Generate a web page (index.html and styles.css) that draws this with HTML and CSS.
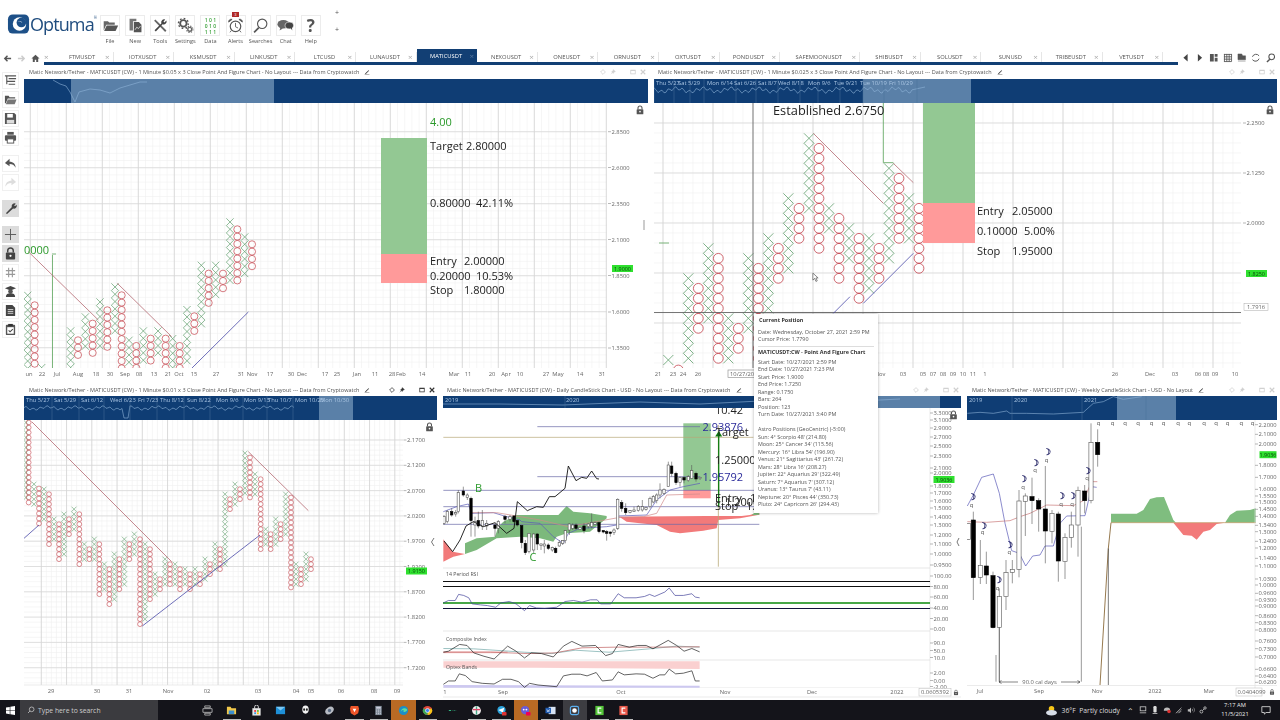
FILE: index.html
```html
<!DOCTYPE html>
<html lang="en">
<head>
<meta charset="utf-8">
<title>Optuma</title>
<link rel="stylesheet" href="styles.css">
</head>
<body>
<svg class="defs" width="0" height="0" aria-hidden="true">
  <symbol id="i-lock" viewBox="0 0 12 14"><path d="M3 6V4a3 3 0 0 1 6 0v2" fill="none" stroke="currentColor" stroke-width="1.6"/><rect x="1" y="6" width="10" height="7.5" rx="1" fill="currentColor"/><circle cx="6" cy="9.5" r="1.2" fill="#fff"/></symbol>
  <symbol id="i-pencil" viewBox="0 0 10 10"><path d="M2 7.5 7.5 2l1 1L3 8.5H2z" fill="currentColor"/><path d="M1 9.6h8" stroke="currentColor" stroke-width=".8"/></symbol>
  <symbol id="i-diamond" viewBox="0 0 8 8"><path d="M4 .8 7.2 4 4 7.2.8 4z" fill="none" stroke="currentColor"/></symbol>
  <symbol id="i-pin" viewBox="0 0 8 8"><path d="M4.5.8 7.2 3.5 5.6 4 4.2 6 2 3.8 4 2.4zM3 5 1 7" fill="currentColor" stroke="currentColor" stroke-width=".6"/></symbol>
  <symbol id="i-max" viewBox="0 0 8 8"><rect x="1" y="1.5" width="6" height="5" fill="none" stroke="currentColor" stroke-width="1"/><path d="M1 2h6" stroke="currentColor" stroke-width="1.2"/></symbol>
  <symbol id="i-x" viewBox="0 0 8 8"><path d="M1 1l6 6M7 1 1 7" stroke="currentColor" stroke-width="1.5"/></symbol>
</svg>

<header class="topbar">
  <div class="logo">
    <svg class="logo-mark" viewBox="0 0 24 22"><rect x="1" y="1" width="22" height="20" rx="5" fill="#1d5088"/><circle cx="13" cy="11" r="7" fill="#fff"/><circle cx="15" cy="9.5" r="5" fill="#1d5088"/><path d="M11 9a4 4 0 0 1 5 1 3 3 0 0 0-5-1z" fill="#fff"/></svg>
    <span class="logo-word">Optuma</span><span class="logo-reg">®</span>
  </div>
  <nav class="tools">
    <div class="tool"><span class="tool-box"><svg viewBox="0 0 20 20"><path d="M2 5h5l1.500 1.500H15V9H5l-3 7z" fill="#666"/><path d="M5.500 10H19l-3 6.500H2.500z" fill="#555"/></svg></span><span class="tool-name">File</span></div>
    <div class="tool"><span class="tool-box"><svg viewBox="0 0 20 20"><path d="M3 2h8v3H7v11H3z" fill="#777"/><path d="M8 6h6l3 3v9H8z" fill="#555"/><path d="M9.500 15l2-3 2 1.500 2.500-3" fill="none" stroke="#fff" stroke-width=".8"/></svg></span><span class="tool-name">New</span></div>
    <div class="tool"><span class="tool-box"><svg viewBox="0 0 20 20"><path d="M4 3l13 13-1.500 1.500L2.500 4.500z" fill="#666"/><path d="M17 4a3.500 3.500 0 0 1-4.500 4.500L4.500 17 3 15.500l8-8A3.500 3.500 0 0 1 15.500 3L13.500 5.500l1 1z" fill="#444"/></svg></span><span class="tool-name">Tools</span></div>
    <div class="tool"><span class="tool-box"><svg viewBox="0 0 20 20"><circle cx="7.500" cy="7.500" r="3.800" fill="none" stroke="#555" stroke-width="2.200"/><circle cx="7.500" cy="7.500" r="5.800" fill="none" stroke="#555" stroke-width="1.600" stroke-dasharray="2 2.500"/><circle cx="15" cy="14.500" r="2.300" fill="none" stroke="#666" stroke-width="1.600"/><circle cx="15" cy="14.500" r="3.800" fill="none" stroke="#666" stroke-width="1.200" stroke-dasharray="1.500 1.500"/></svg></span><span class="tool-name">Settings</span></div>
    <div class="tool"><span class="tool-box binary">1 0 1<br>0 1 0<br>1 1 1</span><span class="tool-name">Data</span></div>
    <div class="tool"><span class="badge">3</span><span class="tool-box"><svg viewBox="0 0 20 20"><circle cx="10" cy="11" r="6.200" fill="none" stroke="#555" stroke-width="1.400"/><path d="M10 7v4.500l3 1.500" fill="none" stroke="#555"/><path d="M2 6a3 3 0 0 1 4-3.200zM18 6a3 3 0 0 0-4-3.200zM5 16l-1.500 2M15 16l1.500 2" fill="#555" stroke="#555"/></svg></span><span class="tool-name">Alerts</span></div>
    <div class="tool"><span class="tool-box"><svg viewBox="0 0 20 20"><circle cx="12" cy="8" r="5.500" fill="none" stroke="#555" stroke-width="1.300"/><path d="M8 12.500 2.500 18" stroke="#555" stroke-width="2"/></svg></span><span class="tool-name">Searches</span></div>
    <div class="tool"><span class="tool-box"><svg viewBox="0 0 20 20"><ellipse cx="7.500" cy="8.500" rx="7" ry="5" fill="#666"/><path d="M4 12l-1 4 4-2.500z" fill="#666"/><ellipse cx="14.500" cy="10" rx="5" ry="4" fill="#444" stroke="#fff" stroke-width=".7"/><path d="M16 13l2 3-.5-3.500z" fill="#444"/></svg></span><span class="tool-name">Chat</span></div>
    <div class="tool"><span class="tool-box qmark">?</span><span class="tool-name">Help</span></div>
  </nav>
  <div class="plus-stack"><span>+</span><span>+</span></div>
</header>

<div class="tabstrip">
  <div class="tab-nav">
    <svg viewBox="0 0 10 10"><path d="M9 5H2M5 2 2 5l3 3" fill="none" stroke="#555" stroke-width="1.600"/></svg>
    <svg viewBox="0 0 10 10"><path d="M1 5h7M5 2l3 3-3 3" fill="none" stroke="#ccc" stroke-width="1.600"/></svg>
    <svg viewBox="0 0 10 10"><path d="M5 .8.500 5H2v4h2.200V6.500h1.600V9H8V5h1.500z" fill="#555"/></svg>
  </div>
  <div class="tabs">
    <div class="tab stub"><i>×</i></div>
    <div class="tab"><b>FTMUSDT</b><i>×</i></div>
    <div class="tab"><b>IOTXUSDT</b><i>×</i></div>
    <div class="tab"><b>KSMUSDT</b><i>×</i></div>
    <div class="tab"><b>LINKUSDT</b><i>×</i></div>
    <div class="tab"><b>LTCUSD</b><i>×</i></div>
    <div class="tab"><b>LUNAUSDT</b><i>×</i></div>
    <div class="tab active"><b>MATICUSDT</b><i>×</i></div>
    <div class="tab"><b>NEXOUSDT</b><i>×</i></div>
    <div class="tab"><b>ONEUSDT</b><i>×</i></div>
    <div class="tab"><b>ORNUSDT</b><i>×</i></div>
    <div class="tab"><b>OXTUSDT</b><i>×</i></div>
    <div class="tab"><b>PONDUSDT</b><i>×</i></div>
    <div class="tab wide"><b>SAFEMOONUSDT</b><i>×</i></div>
    <div class="tab"><b>SHIBUSDT</b><i>×</i></div>
    <div class="tab"><b>SOLUSDT</b><i>×</i></div>
    <div class="tab"><b>SUNUSD</b><i>×</i></div>
    <div class="tab"><b>TRIBEUSDT</b><i>×</i></div>
    <div class="tab"><b>VETUSDT</b><i>×</i></div>
  </div>
  <div class="tab-tools">
    <svg viewBox="0 0 10 10"><path d="M7 1 2.500 5 7 9z" fill="#444"/></svg>
    <svg viewBox="0 0 10 10"><path d="M3 1l4.500 4L3 9z" fill="#444"/></svg>
    <svg viewBox="0 0 10 10"><path d="M1 1h4v8H1zM6 1h3v3H6zM6 5h3v4H6z" fill="#555"/></svg>
    <svg viewBox="0 0 10 10"><path d="M1 1.500h8M1 4h8M1 6.500h8M1 9h8M1.500 1v8M4 1v8M6.500 1v8M9 1v8" stroke="#555" stroke-width=".9"/></svg>
    <svg viewBox="0 0 10 10"><path d="M1 1h4l1 2h3v4H1zM1 8.500h8" fill="#555" stroke="#555" stroke-width=".5"/></svg>
    <svg viewBox="0 0 10 10"><path d="M8.500 3A4 4 0 0 0 1.500 4M1.500 7a4 4 0 0 0 7-1" fill="none" stroke="#555"/></svg>
    <svg viewBox="0 0 10 10"><circle cx="6" cy="4" r="3" fill="none" stroke="#555" stroke-width="1.100"/><path d="M4 6.500 1 9.500" stroke="#555" stroke-width="1.500"/></svg>
  </div>
</div>

<div class="desk">
  <aside class="side">
    <span class="sbtn"><svg viewBox="0 0 14 14"><path d="M1 2h12M5 5h8M3 8h9M5 11h7M3 2v9" stroke="#555" stroke-width="1.200" fill="none"/></svg></span>
    <span class="sbtn"><svg viewBox="0 0 14 14"><path d="M1 3h4l1 1.500h6V6H4l-2 5H1z" fill="#555"/><path d="M4 7h9.500l-2 5H2z" fill="#777"/></svg></span>
    <span class="sbtn"><svg viewBox="0 0 14 14"><path d="M1 1h10l2 2v10H1z" fill="#555"/><rect x="3.500" y="2" width="6" height="4" fill="#fff"/><rect x="3" y="8.500" width="8" height="4" fill="#ddd"/></svg></span>
    <span class="sbtn gap"><svg viewBox="0 0 14 14"><rect x="3.500" y="1" width="7" height="3" fill="#555"/><rect x="1" y="4.500" width="12" height="6" rx="1" fill="#555"/><rect x="3.500" y="8.500" width="7" height="4.500" fill="#fff" stroke="#555"/></svg></span>
    <span class="sbtn"><svg viewBox="0 0 14 14"><path d="M6 2 1 6.500 6 10V7.500c3 0 5 1 6.500 4C12.500 7.500 10 5 6 5z" fill="#555"/></svg></span>
    <span class="sbtn gap"><svg viewBox="0 0 14 14"><path d="M8 2l5 4.500L8 10V7.500c-3 0-5 1-6.500 4C1.500 7.500 4 5 8 5z" fill="#ddd"/></svg></span>
    <span class="sbtn on gap"><svg viewBox="0 0 14 14"><path d="M2 12 8.500 5.500A3 3 0 0 1 12.800 1.800L11 3.500l.8 1 1.700-1.500A3 3 0 0 1 9.800 7L3.300 13z" fill="#444"/></svg></span>
    <span class="sbtn on"><svg viewBox="0 0 14 14"><path d="M7 1v12M1 7h12" stroke="#555" stroke-width="1"/></svg></span>
    <span class="sbtn on lockbtn"><svg viewBox="0 0 12 14"><use href="#i-lock"/></svg></span>
    <span class="sbtn"><svg viewBox="0 0 14 14"><path d="M2 5h10M2 9h10M5 2v10M9 2v10" stroke="#999" stroke-width="1.200"/></svg></span>
    <span class="sbtn"><svg viewBox="0 0 14 14"><path d="M1 3.500 7 1l6 2.500L7 6z" fill="#444"/><circle cx="7" cy="7" r="2.500" fill="#555"/><path d="M2 13c0-3 2-4 5-4s5 1 5 4z" fill="#444"/></svg></span>
    <span class="sbtn"><svg viewBox="0 0 14 14"><path d="M2 1h7l3 3v9H2z" fill="#444"/><path d="M4 6h6M4 8h6M4 10h6" stroke="#fff" stroke-width=".8"/></svg></span>
    <span class="sbtn"><svg viewBox="0 0 14 14"><rect x="2" y="2" width="10" height="11" rx="1" fill="#555"/><rect x="4.500" y="1" width="5" height="2.500" fill="#333"/><rect x="3.500" y="4.500" width="7" height="7" fill="#fff"/><path d="M5 8l1.500 1.500 3-3" fill="none" stroke="#444" stroke-width="1.100"/></svg></span>
  </aside>

  <main class="panes">
    <section class="row row-top">
      <article class="pane w-a">
        <div class="title"><span>Matic Network/Tether - MATICUSDT (CW) - 1 Minute $0.05 x 3 Close Point And Figure Chart - No Layout --- Data from Cryptowatch</span><svg class="pencil"><use href="#i-pencil"/></svg>
          <div class="ctls"><svg><use href="#i-diamond"/></svg><svg><use href="#i-pin"/></svg><svg class="far"><use href="#i-max"/></svg><svg><use href="#i-x"/></svg></div></div>
        <svg class="nav" id="nav1" viewBox="24 79 624 24"></svg>
        <svg class="chart" id="chart1" viewBox="24 103 624 280"></svg>
      </article>
      <article class="pane w-b">
        <div class="title"><span>Matic Network/Tether - MATICUSDT (CW) - 1 Minute $0.025 x 3 Close Point And Figure Chart - No Layout --- Data from Cryptowatch</span><svg class="pencil"><use href="#i-pencil"/></svg>
          <div class="ctls"><svg><use href="#i-diamond"/></svg><svg><use href="#i-pin"/></svg><svg class="far"><use href="#i-max"/></svg><svg><use href="#i-x"/></svg></div></div>
        <svg class="nav" id="nav2" viewBox="654 79 623 24"></svg>
        <svg class="chart" id="chart2" viewBox="654 103 623 280"></svg>
      </article>
    </section>
    <section class="row row-bot">
      <article class="pane w-c">
        <div class="title"><span>Matic Network/Tether - MATICUSDT (CW) - 1 Minute $0.01 x 3 Close Point And Figure Chart - No Layout --- Data from Cryptowatch</span><svg class="pencil"><use href="#i-pencil"/></svg>
          <div class="ctls dark"><svg><use href="#i-diamond"/></svg><svg><use href="#i-pin"/></svg><svg class="far"><use href="#i-max"/></svg><svg><use href="#i-x"/></svg></div></div>
        <svg class="nav" id="nav3" viewBox="24 396 413 24"></svg>
        <svg class="chart" id="chart3" viewBox="24 420 413 280"></svg>
      </article>
      <article class="pane w-d">
        <div class="title"><span>Matic Network/Tether - MATICUSDT (CW) - Daily CandleStick Chart - USD - No Layout --- Data from Cryptowatch</span><svg class="pencil"><use href="#i-pencil"/></svg>
          <div class="ctls"><svg><use href="#i-diamond"/></svg><svg><use href="#i-pin"/></svg><svg class="far"><use href="#i-max"/></svg><svg><use href="#i-x"/></svg></div></div>
        <svg class="nav short" id="nav4" viewBox="443 396 518 12"></svg>
        <svg class="chart" id="chart4" viewBox="443 408 518 292"></svg>
      </article>
      <article class="pane w-e">
        <div class="title"><span>Matic Network/Tether - MATICUSDT (CW) - Weekly CandleStick Chart - USD - No Layout</span><svg class="pencil"><use href="#i-pencil"/></svg>
          <div class="ctls"><svg><use href="#i-diamond"/></svg><svg><use href="#i-pin"/></svg><svg class="far"><use href="#i-max"/></svg><svg><use href="#i-x"/></svg></div></div>
        <svg class="nav" id="nav5" viewBox="967 396 310 24"></svg>
        <svg class="chart" id="chart5" viewBox="967 420 310 280"></svg>
      </article>
    </section>
    <div class="tooltip">
      <p class="tt-head">Current Position</p>
      <p class="tt-sp">Date: Wednesday, October 27, 2021 2:59 PM</p>
      <p>Cursor Price: 1.7790</p>
      <hr>
      <p class="tt-bold">MATICUSDT:CW - Point And Figure Chart</p>
      <p class="tt-mid">Start Date: 10/27/2021 2:59 PM</p>
      <p>End Date: 10/27/2021 7:23 PM</p>
      <p>Start Price: 1.9000</p>
      <p>End Price: 1.7250</p>
      <p>Range: 0.1750</p>
      <p>Bars: 264</p>
      <p>Position: 123</p>
      <p>Turn Date: 10/27/2021 3:40 PM</p>
      <p class="tt-gap">Astro Positions (GeoCentric) (-5:00)</p>
      <p>Sun: 4° Scorpio 48' (214.80)</p>
      <p>Moon: 25° Cancer 34' (115.56)</p>
      <p>Mercury: 16° Libra 54' (196.90)</p>
      <p>Venus: 21° Sagittarius 43' (261.72)</p>
      <p>Mars: 28° Libra 16' (208.27)</p>
      <p>Jupiter: 22° Aquarius 29' (322.49)</p>
      <p>Saturn: 7° Aquarius 7' (307.12)</p>
      <p>Uranus: 13° Taurus 7' (43.11)</p>
      <p>Neptune: 20° Pisces 44' (350.73)</p>
      <p>Pluto: 24° Capricorn 26' (294.43)</p>
    </div>
    <svg class="cursor" viewBox="0 0 8 12"><path d="M1 1v8l2-2 1.500 3.500 1.500-.7L4.500 6.500H7z" fill="#fff" stroke="#555" stroke-width=".8"/></svg>
  </main>
</div>

<footer class="taskbar">
  <span class="start"><svg viewBox="0 0 12 12"><path d="M0 2 5 1.200V5.700H0zM5.800 1 12 0V5.700H5.800zM0 6.400H5v4.500L0 10zM5.800 6.400H12V12L5.800 11z" fill="#fff"/></svg></span>
  <div class="search"><svg viewBox="0 0 12 12"><circle cx="7" cy="5" r="3.500" fill="none" stroke="#ddd"/><path d="M4.500 7.500 1.500 10.500" stroke="#ddd"/></svg><span>Type here to search</span></div>
  <div class="apps">
    <span class="app"><svg viewBox="0 0 12 12"><path d="M3 1h6v2H3zM3 9h6v2H3zM1 4h10v4H1z" fill="none" stroke="#ccc" stroke-width=".8"/></svg></span>
    <span class="app run"><svg viewBox="0 0 12 12"><path d="M1 2h4l1 1.500h5V10H1z" fill="#f2c94c"/><rect x="3" y="6" width="6" height="4" fill="#3b8fd0"/></svg></span>
    <span class="app"><svg viewBox="0 0 12 12"><rect x="1.500" y="3.500" width="9" height="8" fill="#e8e8e8"/><path d="M4 4V2a2 2 0 0 1 4 0v2" fill="none" stroke="#e8e8e8"/><rect x="3.500" y="5.500" width="2" height="2" fill="#e34"/><rect x="6.500" y="5.500" width="2" height="2" fill="#6b3"/><rect x="3.500" y="8" width="2" height="2" fill="#39d"/><rect x="6.500" y="8" width="2" height="2" fill="#fb0"/></svg></span>
    <span class="app"><svg viewBox="0 0 12 12"><rect x="1" y="2" width="10" height="8" fill="#1e90d8"/><path d="M1 2l5 4 5-4" fill="#7cc7f2"/></svg></span>
    <span class="app"><svg viewBox="0 0 12 12"><ellipse cx="6" cy="5" rx="3.500" ry="4.500" fill="#f2f2f2"/><ellipse cx="4.500" cy="5" rx="1" ry="1.500" fill="#222"/><ellipse cx="7.500" cy="5" rx="1" ry="1.500" fill="#222"/></svg></span>
    <span class="app"><svg viewBox="0 0 12 12"><ellipse cx="6" cy="6" rx="5" ry="3.500" fill="#b8bcc4" transform="rotate(-35 6 6)"/><circle cx="6" cy="6" r="1.800" fill="#5a6a82"/></svg></span>
    <span class="app run"><svg viewBox="0 0 12 12"><path d="M2 1h8l1 3-1 5-4 2.500L2 9 1 4z" fill="#f0562a"/><path d="M4 4h4L6 8z" fill="#fff"/></svg></span>
    <span class="app run"><svg viewBox="0 0 12 12"><rect x="2.500" y="1" width="7" height="10" fill="#7e8a96"/><rect x="3.500" y="2" width="5" height="2" fill="#ccd"/><path d="M3.500 5.500h5M3.500 7.500h5M3.500 9.500h5" stroke="#dde" stroke-dasharray="1 1"/></svg></span>
    <span class="app glow"><svg viewBox="0 0 12 12"><circle cx="6" cy="6" r="5" fill="#1b8fc9"/><path d="M3 8a4 4 0 0 1 7-3c0 2-2 2.500-3 2.500S5 6.500 6.500 5.500A3 3 0 0 0 3 8z" fill="#5fdc9c"/></svg></span>
    <span class="app run"><svg viewBox="0 0 12 12"><circle cx="6" cy="6" r="5" fill="#e0483a"/><path d="M6 6 10.500 3.500A5 5 0 0 1 6 11z" fill="#f5c518"/><path d="M6 6 6 11A5 5 0 0 1 1.500 3.500z" fill="#3aa757"/><circle cx="6" cy="6" r="2.200" fill="#4285f4" stroke="#fff" stroke-width=".7"/></svg></span>
    <span class="app"><svg viewBox="0 0 12 12"><path d="M2 6h2.500" stroke="#35c48a" stroke-width="1"/><path d="M6 6h4" stroke="#35c48a" stroke-width=".6" stroke-dasharray="1 .7"/></svg></span>
    <span class="app run"><svg viewBox="0 0 12 12"><circle cx="6" cy="6" r="4.800" fill="#f2f2f2"/><path d="M6 1.500v9" stroke="#4a8" stroke-width="1.500"/><path d="M2 5h8" stroke="#d46" stroke-width="1.500"/></svg></span>
    <span class="app run"><svg viewBox="0 0 12 12"><circle cx="6" cy="5.500" r="4.500" fill="#2aa3dc"/><path d="M2.500 5.500 9 3 7.500 8.500 5.500 7z" fill="#fff"/><rect x="6.500" y="7.500" width="5" height="4" rx="1" fill="#d33"/></svg></span>
    <span class="app glow"><svg viewBox="0 0 12 12"><circle cx="5.500" cy="5.500" r="4.500" fill="#6a5bd6"/><circle cx="4" cy="5" r="1" fill="#fff"/><circle cx="7" cy="5" r="1" fill="#fff"/><rect x="6.500" y="7.500" width="5" height="4" rx="1" fill="#e05"/></svg></span>
    <span class="app run"><svg viewBox="0 0 12 12"><rect x="4" y="2" width="7.500" height="8" fill="#d7e3f4"/><rect x=".5" y="3" width="6" height="6" fill="#1f5cb4"/><path d="M2 4.500l.8 3 .7-2 .7 2 .8-3" fill="none" stroke="#fff" stroke-width=".5"/></svg></span>
    <span class="app sel"><svg viewBox="0 0 12 12"><rect x="1.500" y="1.500" width="9" height="9" rx="2" fill="none" stroke="#5ab0f0" stroke-width="1.200"/><circle cx="6" cy="6" r="2.500" fill="#fff"/></svg></span>
    <span class="app run"><svg viewBox="0 0 12 12"><rect x="1.500" y="1" width="9" height="10" fill="#55c53a"/><path d="M8 3.500H4.500v5H8" fill="none" stroke="#fff" stroke-width="1.300"/></svg></span>
    <span class="app run"><svg viewBox="0 0 12 12"><rect x="1.500" y="1" width="9" height="10" fill="#e8584a"/><path d="M8 3.500H4.500v5H8" fill="none" stroke="#fff" stroke-width="1.300"/></svg></span>
  </div>
  <div class="tray">
    <svg class="weather" viewBox="0 0 14 12"><circle cx="7" cy="4" r="3" fill="#f5c518"/><ellipse cx="7" cy="8.500" rx="6" ry="3" fill="#d8dee8"/></svg>
    <span class="wtext">36°F&nbsp; Partly cloudy</span>
    <span class="tray-ic">⌃</span>
    <svg class="tray-svg" viewBox="0 0 10 10"><rect x="1.500" y="1" width="7" height="5" fill="none" stroke="#ccc"/><path d="M1 8.500h8" stroke="#ccc"/></svg>
    <svg class="tray-svg" viewBox="0 0 10 10"><rect x="3" y="0" width="4" height="8" rx="1.500" fill="#ddd"/><path d="M2 9.500h6" stroke="#ddd"/></svg>
    <svg class="tray-svg" viewBox="0 0 10 10"><path d="M1 6a3 3 0 0 1 8 0z" fill="#bbb"/><circle cx="7.500" cy="7" r="2.200" fill="#d33"/></svg>
    <svg class="tray-svg" viewBox="0 0 10 10"><path d="M1 9 8 2M3 9l5-5M5 9l3-3" stroke="#aaa"/></svg>
    <svg class="tray-svg" viewBox="0 0 10 10"><path d="M1 4h2l2-2v7L3 7H1z" fill="#bbb"/><path d="M6.500 3.500a2.500 2.500 0 0 1 0 3M8 2a4 4 0 0 1 0 6" fill="none" stroke="#bbb" stroke-width=".7"/></svg>
    <svg class="tray-svg" viewBox="0 0 10 10"><circle cx="3" cy="7" r="1.800" fill="none" stroke="#ccc"/><circle cx="7.500" cy="2.500" r="1.500" fill="none" stroke="#ccc"/><path d="M4.500 5.500 6.500 3.500" stroke="#ccc"/></svg>
    <div class="clock"><span>7:17 AM</span><span>11/5/2021</span></div>
    <svg class="notif" viewBox="0 0 12 12"><path d="M1 2h10v7H6L4 11V9H1z" fill="none" stroke="#ddd"/></svg>
  </div>
</footer>
<script src="script.js"></script>
</body>
</html>
```
FILE: styles.css
```css
* { box-sizing: border-box; }
html, body { margin: 0; padding: 0; }
body {
  width: 1280px; height: 720px; overflow: hidden; background: #fff;
  font-family: "Open Sans", "Noto Sans", sans-serif; color: #555;
  display: flex; flex-direction: column;
  filter: blur(.35px);
}
.defs { position: absolute; }

/* top toolbar */
.topbar { height: 49px; display: flex; align-items: flex-start; position: relative; flex: none; }
.logo { width: 97.500px; padding: 13px 0 0 7px; display: flex; align-items: flex-start; flex: none; }
.logo-mark { width: 23px; height: 22px; flex: none; }
.logo-word { font-size: 18px; line-height: 22px; letter-spacing: -.9px; color: #1f4c7e; }
.logo-reg { font-size: 4px; line-height: 10px; color: #1f4c7e; }
.tools { display: flex; padding-top: 15px; }
.tool { width: 25.100px; display: flex; flex-direction: column; align-items: center; position: relative; }
.tool-box { width: 20px; height: 21px; border: 1px solid #ececec; display: flex; align-items: center; justify-content: center; }
.tool-box svg { width: 17px; height: 17px; }
.tool-name { font-size: 5.600px; line-height: 8px; margin-top: 1px; color: #555; white-space: nowrap; }
.binary { font-size: 5px; line-height: 6px; color: #3aa13a; text-align: center; display: block; padding-top: 1px; font-weight: 600; }
.qmark { font-size: 17px; font-weight: 700; color: #555; }
.badge { position: absolute; top: -3px; left: 9px; width: 7px; height: 5px; background: #b02a2a; color: #fff; font-size: 4px; line-height: 5px; text-align: center; }
.plus-stack { position: absolute; left: 335px; top: 8px; display: flex; flex-direction: column; gap: 7px; font-size: 7px; line-height: 10px; color: #555; }

/* tab strip */
.tabstrip { height: 16px; display: flex; position: relative; flex: none; }
.tab-nav { width: 44px; display: flex; align-items: center; padding: 3px 0 0 3px; gap: 5px; flex: none; }
.tab-nav svg { width: 9px; height: 9px; }
.tabs { display: flex; width: 1134px; flex: none; height: 16px; border-bottom: 3px solid #123f74; padding-top: 3px; }
.tab { width: 60.600px; flex: none; height: 10px; display: flex; align-items: center; padding: 0 3px 0 6px; border-right: 1px solid #e6e6e6; background: #fff; }
.tab b { flex: 1; text-align: center; font-weight: 400; font-size: 5.800px; color: #555; white-space: nowrap; }
.tab i { font-style: normal; font-size: 8px; color: #aaa; line-height: 8px; }
.tab.stub { width: 9px; padding: 0; border: 0; }
.tab.wide { width: 80px; }
.tab.active { background: #123f74; height: 13px; margin-top: -3px; border: 0; }
.tab.active b { color: #fff; }
.tab.active i { color: #56779f; }
.tab-tools { flex: 1; display: flex; align-items: center; padding: 2px 0 0 3px; gap: 4.600px; }
.tab-tools svg { width: 9.500px; height: 9.500px; }

/* desk */
.desk { flex: 1; display: flex; min-height: 0; }
.side { width: 24px; flex: none; padding: 7px 0 0 2px; display: flex; flex-direction: column; gap: 2px; }
.sbtn { width: 17px; height: 17px; border: 1px solid #f0f0f0; display: flex; align-items: center; justify-content: center; flex: none; }
.sbtn svg { width: 13px; height: 13px; color: #444; }
.sbtn.gap { margin-bottom: 7px; }
.sbtn.on { background: #dcdcdc; border-color: #dcdcdc; }
.panes { width: 1253px; flex: none; position: relative; display: flex; flex-direction: column; }
.row { display: flex; gap: 6px; }
.row-top { height: 318px; }
.row-bot { height: 317px; }
.pane { display: flex; flex-direction: column; flex: none; }
.w-a { width: 624px; } .w-b { width: 623px; }
.w-c { width: 413px; } .w-d { width: 518px; } .w-e { width: 310px; }
.title { height: 14px; display: flex; align-items: center; padding-left: 5px; flex: none; font-size: 5.520px; color: #555; white-space: nowrap; overflow: hidden; }
.row-bot .title { height: 13px; }
.w-b .title, .w-d .title { padding-left: 4px; }
.pencil { width: 6px; height: 6px; margin-left: 5px; color: #333; flex: none; }
.ctls { margin-left: auto; display: flex; gap: 4px; padding-right: 2px; color: #cfcfcf; flex: none; align-items: center; }
.ctls.dark { color: #333; }
.ctls svg { width: 6px; height: 6px; }
.ctls svg.far { margin-left: 10px; }
.nav { height: 24px; width: 100%; display: block; flex: none; background: #0f3d74; }
.nav.short { height: 12px; }
.chart { flex: 1; min-height: 0; width: 100%; display: block; background: #fff; }

/* svg text */
.tk { font-size: 5.800px; fill: #666; dominant-baseline: central; }
.dt { font-size: 5.800px; fill: #666; text-anchor: middle; dominant-baseline: central; }
.big { font-size: 11px; fill: #222; dominant-baseline: central; }
.bigger { font-size: 12.800px; fill: #222; dominant-baseline: central; }
.gn { fill: #2c9a2c; }
.bl { fill: #2a2a9a; }
.navt { font-size: 5.800px; fill: #a9c4e2; dominant-baseline: central; }
.tag { font-size: 5.400px; fill: #0a4a0a; text-anchor: middle; dominant-baseline: central; }
.lbl { font-size: 5.200px; fill: #555; dominant-baseline: central; }
.sym { font-size: 8.500px; font-weight: 700; fill: #14145a; text-anchor: middle; dominant-baseline: central; }
.q { font-size: 6px; fill: #555; text-anchor: middle; dominant-baseline: central; }

/* tooltip */
.tooltip { position: absolute; left: 730px; top: 249px; width: 124px; height: 199px; background: #fff; box-shadow: 0 0 3px rgba(0,0,0,.3); padding: 3px 4px 0 4px; font-size: 5.420px; line-height: 7.480px; color: #555; z-index: 5; white-space: nowrap; }
.tooltip p { margin: 0; }
.tt-head { font-weight: 700; color: #333; padding-left: 1px; }
.tt-sp { margin-top: 4.500px !important; }
.tooltip hr { border: 0; border-top: 1px solid #ddd; margin: 2.500px 0 1.500px; }
.tt-bold { font-weight: 700; color: #333; }
.tt-mid { margin-top: 2.500px !important; }
.tt-gap { margin-top: 7.500px !important; }
.cursor { position: absolute; left: 788px; top: 207px; width: 7px; height: 11px; z-index: 3; }

/* taskbar */
.taskbar { height: 20px; background: #14141a; display: flex; align-items: center; flex: none; color: #ddd; }
.start { width: 20px; display: flex; justify-content: center; flex: none; }
.start svg { width: 9px; height: 9px; }
.search { width: 138px; height: 20px; background: #3b3b3f; display: flex; align-items: center; padding-left: 7px; gap: 3px; flex: none; font-size: 6.800px; color: #ccc; }
.search svg { width: 8px; height: 8px; }
.apps { display: flex; padding-left: 37px; flex: none; }
.app { width: 24.500px; height: 20px; display: flex; align-items: center; justify-content: center; position: relative; }
.app svg { width: 11px; height: 11px; }
.app.run::after { content: ""; position: absolute; left: 3px; right: 3px; bottom: 0; height: 1px; background: #bbb; }
.app.glow { background: #b96a24; }
.app.sel { background: #3d3d42; }
.tray { margin-left: auto; display: flex; align-items: center; flex: none; padding-right: 9px; }
.weather { width: 13px; height: 11px; margin-right: 4px; }
.wtext { font-size: 6.800px; color: #ddd; margin-right: 7px; white-space: nowrap; }
.tray-ic { font-size: 8px; width: 10px; color: #ddd; margin-right: 2px; }
.tray-svg { width: 8px; height: 8px; margin-right: 4px; }
.clock { display: flex; flex-direction: column; align-items: center; width: 42px; font-size: 5.800px; line-height: 9px; color: #eee; margin-left: 3px; }
.notif { width: 10px; height: 10px; margin-left: 5px; }
```
FILE: script.js
```js
const NS = 'http://www.w3.org/2000/svg';
const $ = id => document.getElementById(id);
function el(p, tag, attrs) {
  const e = document.createElementNS(NS, tag);
  for (const k in attrs) e.setAttribute(k, attrs[k]);
  p.appendChild(e);
  return e;
}
const line = (p, a, b, c, d, s, w) => el(p, 'line', { x1: a, y1: b, x2: c, y2: d, stroke: s, 'stroke-width': w || .7 });
const rect = (p, x, y, w, h, f) => el(p, 'rect', { x, y, width: w, height: h, fill: f });
function txt(p, x, y, s, cls) { const t = el(p, 'text', { x, y, class: cls }); t.textContent = s; return t; }
function poly(p, pts, s, w, map) {
  const d = pts.map(q => map ? map(q).join(',') : q.join(',')).join(' ');
  return el(p, 'polyline', { points: d, fill: 'none', stroke: s, 'stroke-width': w || .7 });
}
function area(p, pts, f, map) {
  return el(p, 'polygon', { points: pts.map(q => map ? map(q).join(',') : q.join(',')).join(' '), fill: f });
}
function grid(p, o) {
  for (let x = o.vx; x < o.x1; x += o.mx) line(p, x, o.y0, x, o.y1, '#f0f0f0', .6);
  for (let y = o.hy; y < o.y1; y += o.my) line(p, o.x0, y, o.x1, y, '#f0f0f0', .6);
  for (let x = o.vx; x < o.x1; x += o.sx) line(p, x, o.y0, x, o.y1, '#cfcfcf', .7);
  for (let y = o.hy; y < o.y1; y += o.sy) line(p, o.x0, y, o.x1, y, '#d6d6d6', .7);
}
/* Point & figure columns: [type, x, top, bottom] in crop units, mapped to the page */
function pf(p, cols, pitch, map, w) {
  cols.forEach(c => {
    const [x, top] = map([c[1], c[2]]);
    const [, bot] = map([c[1], c[3]]);
    const n = Math.max(1, Math.round((bot - top) / pitch));
    for (let i = 0; i < n; i++) {
      const y = top + pitch * (i + .5), r = pitch / 2;
      if (c[0] === 'X') {
        el(p, 'path', { d: `M${x - r} ${y - r}L${x + r} ${y + r}M${x + r} ${y - r}L${x - r} ${y + r}`, stroke: '#5f9e6c', 'stroke-width': w, fill: 'none' });
      } else {
        el(p, 'circle', { cx: x, cy: y, r: r - .1, stroke: '#c4434c', 'stroke-width': w, fill: 'none' });
      }
    }
  });
}
function axisY(p, x, list) {
  list.forEach(([s, y]) => { line(p, x, y, x + 3, y, '#888', .6); txt(p, x + 3.5, y, s, 'tk'); });
}
function lock(p, x, y, small) {
  const w = small ? 5 : 8, h = small ? 6 : 10;
  const u = el(p, 'use', { href: '#i-lock', x: x - w / 2, y: y - h / 2, width: w, height: h });
  u.style.color = '#555';
  return u;
}
function tag(p, x, y, w, s, fill) {
  rect(p, x, y - 3.5, w, 7, fill || '#2fe02f');
  txt(p, x + w / 2, y, s, 'tag');
}
function dates(p, list, y) { list.forEach(([s, x]) => txt(p, x, y, s, 'dt')); }

/* --------- navigators --------- */
function nav(id, o) {
  const s = $(id);
  if (o.light) rect(s, o.light[0], o.light[1], o.light[2], o.light[3], '#5a80a8');
  if (o.pts) poly(s, o.pts, '#8fb3d8', .6);
  (o.ticks || []).forEach(x => line(s, x, o.ty[0], x, o.ty[1], '#4a709a', .5));
  (o.text || []).forEach(([t, x]) => txt(s, x, o.ty[0] + 3.500, t, 'navt'));
}
function wave(x0, x1, base, amp, step) {
  const a = [];
  for (let x = x0; x <= x1; x += step) a.push([x, base + amp * Math.sin(x * .9) * .5 + amp * Math.sin(x * .23) * .5]);
  return a;
}
nav('nav1', { light: [71, 79, 203, 24], pts: [[53, 80], [60, 84], [66, 86], [70, 92], [75, 102], [79, 92], [90, 89], [100, 90], [110, 93], [120, 88], [130, 85], [140, 82], [147, 82]], ty: [79, 103] });
nav('nav2', {
  light: [863, 79, 108, 24], pts: wave(654, 912, 90, 3.5, 2).concat([[925, 87]]), ty: [79, 103],
  ticks: [654, 674, 690, 704, 736, 756, 778, 800, 818, 840, 863, 884, 917],
  text: [['Thu 5/27', 656], ['Sat 5/29', 678], ['Mon 6/14', 707], ['Sat 6/26', 734], ['Sat 8/7', 758], ['Wed 8/18', 778], ['Mon 9/6', 808], ['Tue 9/21', 834], ['Tue 10/19', 860], ['Fri 10/29', 889]]
});
nav('nav3', {
  light: [319, 396, 34, 24], pts: wave(24, 295, 408, 2.500, 2).map(q => (q[0] > 122 && q[0] < 130) ? [q[0], 418] : q), ty: [396, 420],
  ticks: [52, 79, 104, 130, 157, 184, 210, 243, 267, 293],
  text: [['Thu 5/27', 26], ['Sat 5/29', 54], ['Sat 6/12', 81], ['Wed 6/23', 110], ['Fri 7/23', 138], ['Thu 8/12', 160], ['Sun 8/22', 187], ['Mon 9/6', 216], ['Mon 9/13', 244], ['Thu 10/7', 268], ['Mon 10/25', 295], ['Mon 10/30', 320]]
});
nav('nav4', {
  light: [754, 396, 186, 12], pts: [[443, 404], [500, 404], [563, 405], [600, 403.500], [640, 402], [700, 404], [760, 401], [830, 402], [880, 400], [900, 399]], ty: [396, 408],
  ticks: [565], text: [['2019', 445], ['2020', 566]]
});
const m5n = ([x, y]) => [960 + x / 3, 380 + y / 3];
nav('nav5', {
  light: [1117, 396, 59, 24],
  pts: [[22, 100], [60, 97], [100, 100], [140, 93], [150, 100], [200, 100], [280, 102], [370, 97], [400, 70], [430, 65], [460, 50], [490, 58], [545, 50]].map(m5n),
  ty: [396, 420], ticks: [1012, 1082, 1146],
  text: [['2019', 969], ['2020', 1014], ['2021', 1084]]
});

/* --------- chart 1 --------- */
(function () {
  const s = $('chart1');
  const m = ([x, y]) => [x / 3, 110 + y / 3];
  grid(s, { x0: 24, x1: 607, y0: 103, y1: 368, vx: 30.300, hy: 131.700, mx: 7.200, my: 7.200, sx: 36, sy: 36 });
  line(s, 52.500, 255, 52.500, 370, '#5aa35a', .8);
  line(s, 52, 254, 56, 254, '#5aa35a', .8);
  pf(s, [['X', 83, 545, 775], ['O', 104, 575, 775], ['X', 125, 762, 775], ['X', 212, 652, 775], ['O', 234, 680, 735], ['X', 256, 610, 710], ['O', 278, 630, 735], ['X', 300, 565, 715], ['O', 322, 590, 712], ['X', 345, 520, 680], ['O', 365, 545, 775], ['X', 387, 680, 775], ['O', 409, 697, 775], ['X', 430, 652, 760], ['O', 452, 675, 760], ['X', 474, 652, 735], ['O', 497, 675, 775], ['X', 518, 675, 775], ['O', 539, 697, 775], ['X', 561, 588, 765], ['O', 583, 608, 670], ['X', 604, 455, 650], ['O', 626, 480, 585], ['X', 647, 455, 565], ['O', 669, 480, 540], ['X', 690, 325, 520], ['O', 712, 347, 518], ['X', 734, 370, 498], ['O', 756, 392, 475]], 7.300, m, .7);
  poly(s, [[85, 425], [295, 630]], '#b56a72', .8, m);
  poly(s, [[352, 520], [515, 680]], '#b56a72', .8, m);
  poly(s, [[575, 775], [745, 606]], '#4a4aa8', .8, m);
  rect(s, 381, 138, 46, 116, '#93c893');
  rect(s, 381, 254, 46, 29, '#ff9a9a');
  rect(s, 24, 368, 624, 15, '#fff');
  [['4.00', 430, 121, 'big gn'], ['Target', 430, 145, 'big'], ['2.80000', 466, 145, 'big'], ['0.80000', 430, 202, 'big'], ['42.11%', 476, 202, 'big'], ['Entry', 430, 260, 'big'], ['2.00000', 464, 260, 'big'], ['0.20000', 430, 275, 'big'], ['10.53%', 476, 275, 'big'], ['Stop', 430, 289, 'big'], ['1.80000', 464, 289, 'big']].forEach(t => txt(s, t[1], t[2], t[0], t[3]));
  txt(s, 24, 249, '0000', 'big gn');
  axisY(s, 608, [['2.8500', 131.700], ['2.6000', 167.500], ['2.3500', 203.500], ['2.1000', 239.500], ['1.8500', 275.500], ['1.6000', 312], ['1.3500', 348]]);
  tag(s, 612, 268.500, 21, '1.9000');
  lock(s, 640, 110);
  dates(s, [['un', 29], ['22', 42], ['Jul', 57], ['Aug', 78], ['18', 96], ['30', 110], ['Sep', 125], ['08', 139], ['13', 154], ['21', 168], ['Oct', 179], ['15', 194], ['27', 216], ['31', 241], ['Nov', 252], ['17', 270], ['30', 291], ['Dec', 302], ['17', 325], ['25', 337], ['Jan', 357], ['11', 375], ['28', 392], ['Feb', 401], ['14', 422], ['Mar', 454], ['11', 468], ['20', 492], ['Apr', 506], ['10', 520], ['27', 546], ['May', 558], ['14', 580], ['31', 602]], 374);
  line(s, 644, 220, 644, 230, '#999', 1);
})();

/* --------- chart 2 --------- */
(function () {
  const s = $('chart2');
  const m = ([x, y]) => [650 + x / 3, 100 + y / 3];
  grid(s, { x0: 654, x1: 1241, y0: 103, y1: 368, vx: 663, hy: 123, mx: 10, my: 10, sx: 50, sy: 50 });
  pf(s, [['X', 55, 765, 805], ['O', 85, 795, 805], ['X', 115, 520, 805], ['O', 145, 550, 700], ['X', 175, 430, 670], ['O', 205, 460, 805], ['X', 235, 640, 790], ['O', 265, 670, 760], ['X', 295, 460, 700], ['O', 325, 490, 805], ['X', 355, 400, 640], ['O', 385, 430, 550], ['X', 415, 280, 520], ['O', 447, 310, 430], ['X', 477, 100, 340], ['O', 507, 130, 460], ['X', 537, 310, 400], ['O', 567, 340, 550], ['X', 597, 370, 490], ['O', 627, 400, 610], ['X', 657, 400, 580], ['O', 687, 430, 550], ['X', 717, 190, 490], ['O', 747, 220, 430], ['X', 777, 280, 430], ['O', 807, 310, 520]], 10, m, .8);
  line(s, 753, 103, 753, 368, '#666', .9);
  line(s, 654, 312.500, 1241, 312.500, '#666', .9);
  poly(s, [[490, 100], [700, 310]], '#b56a72', .8, m);
  poly(s, [[730, 190], [790, 248]], '#b56a72', .8, m);
  poly(s, [[700, 0], [700, 188], [730, 188]], '#5aa35a', .8, m);
  poly(s, [[640, 610], [790, 460]], '#4a4aa8', .8, m);
  poly(s, [[550, 640], [600, 590]], '#4a4aa8', .8, m);
  line(s, 659, 243, 669, 243, '#5aa35a', .8);
  rect(s, 923, 103, 52, 100, '#93c893');
  rect(s, 923, 203, 52, 40, '#ff9a9a');
  rect(s, 654, 368, 623, 15, '#fff');
  txt(s, 773, 110, 'Established 2.6750', 'bigger');
  [['Entry', 977, 210], ['2.05000', 1012, 210], ['0.10000', 977, 230], ['5.00%', 1024, 230], ['Stop', 977, 250], ['1.95000', 1012, 250]].forEach(t => txt(s, t[1], t[2], t[0], 'big'));
  axisY(s, 1243, [['2.2500', 123], ['2.1250', 173], ['2.0000', 223]]);
  tag(s, 1246, 273.500, 21, '1.8250');
  el(s, 'rect', { x: 1244, y: 303.500, width: 24, height: 7, fill: '#fff', stroke: '#aaa', 'stroke-width': .5 });
  txt(s, 1247, 307, '1.7916', 'tk');
  lock(s, 1270, 110);
  dates(s, [['21', 658], ['23', 673], ['24', 683], ['26', 698], ['Nov', 880], ['03', 903], ['05', 923], ['07', 933], ['08', 943], ['09', 953], ['10', 963], ['11', 973], ['1', 985], ['26', 1115], ['Dec', 1150], ['03', 1175], ['06', 1198], ['08', 1206], ['09', 1215], ['10', 1235]], 374);
  el(s, 'rect', { x: 728, y: 370, width: 30, height: 7.500, fill: '#fff', stroke: '#888', 'stroke-width': .6 });
  txt(s, 730, 373.800, '10/27/202', 'tk');
})();

/* --------- chart 3 --------- */
(function () {
  const s = $('chart3');
  const m = ([x, y]) => [x / 3, 380 + y / 3];
  grid(s, { x0: 24, x1: 403, y0: 420, y1: 685, vx: 41.300, hy: 440, mx: 5.050, my: 5.060, sx: 25.250, sy: 25.300 });
  const A = [[86, 120, 375], [102, 305, 375], [117, 318, 435], [132, 320, 420], [147, 335, 495], [162, 410, 490], [177, 425, 540], [192, 395, 530], [207, 410, 465], [222, 380, 450], [238, 395, 555], [253, 485, 540], [268, 500, 540], [283, 470, 540], [298, 485, 648], [313, 545, 640], [328, 560, 678], [343, 515, 665], [358, 530, 635], [373, 470, 620], [388, 485, 540], [403, 455, 530], [420, 470, 738], [435, 485, 730], [450, 500, 660], [465, 575, 650], [480, 590, 632], [495, 530, 625], [510, 545, 620], [525, 545, 620], [540, 560, 632], [555, 560, 625], [570, 575, 632], [585, 560, 625], [600, 575, 620], [615, 530, 610], [630, 545, 590], [645, 485, 575], [660, 500, 572], [675, 335, 560], [690, 350, 390], [705, 305, 375], [720, 320, 360], [735, 212, 350], [750, 225, 360], [765, 275, 345], [782, 290, 510], [797, 440, 500], [812, 455, 510], [827, 410, 495], [842, 425, 480], [857, 335, 465], [873, 345, 632], [888, 545, 620], [903, 560, 618], [918, 515, 605], [933, 530, 570]];
  pf(s, [['X', 78, 120, 360]].concat(A.map((c, i) => [i % 2 ? 'X' : 'O', c[0], c[1], c[2]])), 5, m, .6);
  poly(s, [[95, 125], [515, 545]], '#b56a72', .8, m);
  poly(s, [[745, 215], [925, 392]], '#b56a72', .8, m);
  poly(s, [[72, 475], [117, 435]], '#4a4aa8', .8, m);
  poly(s, [[427, 738], [780, 465]], '#4a4aa8', .8, m);
  rect(s, 24, 685, 413, 15, '#fff');
  line(s, 24, 685, 403, 685, '#ddd', .6);
  const ys = ['2.1700', '2.1200', '2.0700', '2.0200', '1.9700', '1.9200', '1.8700', '1.8200', '1.7700', '1.7200'];
  axisY(s, 403.500, ys.map((t, i) => [t, 440 + i * 25.300]));
  tag(s, 406, 571, 21, '1.9150');
  lock(s, 429.500, 427);
  dates(s, [['29', 51], ['30', 97], ['31', 129], ['Nov', 168], ['02', 207], ['03', 258], ['04', 296], ['05', 311], ['06', 341], ['08', 374], ['09', 397]], 690.500);
  el(s, 'path', { d: 'M434 538l-2.500 4 2.500 4', fill: 'none', stroke: '#777', 'stroke-width': 1 });
})();

function candle(s, c, m, bw) {
  const [x, wt] = m([c[0], c[1]]);
  const [, wb] = m([c[0], c[2]]);
  const [, bt] = m([c[0], c[3]]);
  const [, bb] = m([c[0], c[4]]);
  line(s, x, wt, x, wb, '#555', .6);
  el(s, 'rect', { x: x - bw / 2, y: bt, width: bw, height: Math.max(bb - bt, .8), fill: c[5] ? '#000' : '#fff', stroke: c[5] ? '#000' : '#555', 'stroke-width': .6 });
}

/* --------- chart 4 --------- */
(function () {
  const s = $('chart4');
  const m = ([x, y]) => [440 + x / 3, 380 + y / 3];
  const b = ([x, y]) => [440 + x / 2.958, 565 + y / 2.958];
  /* main price panel */
  rect(s, 683.300, 423.300, 27.400, 66.700, '#93c893');
  rect(s, 683.300, 490, 27.400, 8.300, '#ff9a9a');
  area(s, [[10, 478], [38, 515], [75, 522], [40, 530], [10, 545]], '#f27a7a', m);
  area(s, [[75, 490], [110, 475], [165, 470], [175, 440], [190, 425], [230, 405], [300, 405], [355, 405], [380, 378], [400, 395], [450, 400], [500, 408], [500, 415], [450, 455], [380, 460], [350, 470], [340, 485], [300, 475], [240, 470], [170, 475], [110, 510], [75, 522]], '#7cb97c', m);
  area(s, [[530, 410], [800, 408], [905, 408], [930, 405], [945, 400], [958, 400], [958, 404], [900, 415], [835, 420], [830, 445], [790, 452], [720, 460], [690, 455], [650, 435], [600, 430], [560, 425], [540, 412]], '#f27a7a', m);
  area(s, [[935, 406], [945, 397], [958, 400], [958, 404]], '#7cb97c', m);
  const H = [[10, 10, 958], [172, 10, 940], [331, 10, 958], [380, 10, 958], [433, 10, 958]];
  H.forEach(([y, a, c], i) => poly(s, [[a, y], [c, y]], i === 1 ? '#b7a878' : '#6a6aa8', .7, m));
  poly(s, [[292, 140], [780, 140]], '#6a6aa8', .7, m);
  poly(s, [[292, 290], [780, 290]], '#6a6aa8', .7, m);
  poly(s, [[835, 135], [835, 560]], '#b7a878', .8, m);
  poly(s, [[10, 395], [50, 380], [85, 372], [95, 400], [160, 398], [200, 410], [240, 420], [245, 425], [300, 430], [340, 470], [370, 490], [385, 460], [420, 445], [500, 440], [530, 435], [535, 408], [620, 405], [650, 360], [690, 330], [730, 320], [780, 310]], '#5a5ab8', .7, m);
  poly(s, [[95, 398], [170, 398], [300, 420], [385, 440], [540, 412], [610, 410], [650, 400], [680, 345], [780, 342]], '#d08a8a', .7, m);
  const C = [[12, 405, 435, 410, 430, 0], [22, 390, 430, 395, 425, 0], [35, 385, 410, 395, 405, 1], [47, 390, 410, 398, 402, 0], [55, 330, 400, 338, 395, 0], [70, 320, 350, 333, 345, 1], [82, 340, 360, 345, 352, 0], [93, 350, 470, 355, 422, 1], [105, 410, 470, 425, 435, 0], [115, 395, 445, 422, 438, 1], [127, 390, 450, 422, 440, 0], [140, 420, 450, 430, 438, 0], [165, 430, 470, 435, 445, 1], [175, 420, 460, 425, 445, 0], [195, 405, 430, 410, 418, 1], [210, 405, 425, 410, 418, 0], [222, 405, 430, 408, 425, 1], [232, 420, 440, 422, 435, 1], [245, 435, 505, 437, 488, 1], [256, 480, 525, 490, 518, 1], [267, 460, 520, 460, 515, 0], [281, 460, 520, 462, 510, 0], [292, 460, 510, 462, 492, 1], [303, 490, 510, 492, 497, 0], [313, 480, 520, 492, 498, 0], [325, 490, 510, 495, 505, 1], [337, 500, 515, 503, 510, 0], [347, 500, 520, 505, 518, 1], [358, 480, 500, 488, 498, 0], [368, 480, 495, 482, 490, 0], [376, 450, 490, 452, 482, 0], [388, 430, 465, 432, 450, 0], [398, 430, 450, 435, 445, 0], [408, 430, 450, 435, 445, 1], [420, 440, 450, 442, 448, 0], [432, 430, 460, 438, 452, 1], [445, 430, 445, 432, 440, 0], [455, 400, 445, 428, 440, 0], [465, 425, 435, 428, 433, 0], [477, 425, 460, 428, 455, 1], [490, 450, 460, 452, 456, 1], [500, 450, 482, 455, 460, 1], [511, 455, 470, 456, 460, 1], [522, 445, 465, 450, 458, 0], [533, 355, 450, 358, 445, 0], [545, 360, 395, 368, 385, 1], [557, 370, 405, 385, 398, 1], [570, 390, 400, 392, 397, 0], [582, 380, 395, 390, 394, 0], [595, 375, 395, 380, 392, 0], [607, 360, 395, 380, 390, 0], [618, 380, 392, 382, 388, 0], [630, 350, 385, 355, 380, 0], [640, 345, 370, 350, 366, 0], [650, 340, 370, 345, 362, 0], [660, 310, 355, 330, 345, 0], [672, 325, 345, 328, 340, 0], [685, 245, 320, 255, 320, 0], [695, 245, 290, 258, 280, 1], [708, 275, 315, 280, 308, 1], [720, 290, 320, 292, 308, 0], [732, 290, 310, 293, 300, 1], [745, 285, 305, 290, 302, 0], [755, 255, 295, 272, 295, 0], [768, 275, 305, 280, 297, 1], [780, 290, 300, 292, 296, 0]];
  C.forEach(c => candle(s, c, m, 2.400));
  poly(s, [[12, 483], [38, 515], [60, 480], [78, 438], [100, 425], [130, 440], [165, 428], [200, 460], [222, 445], [232, 365], [262, 392], [290, 380], [310, 382], [328, 350], [345, 350], [375, 325], [385, 258], [408, 302], [425, 292], [440, 295], [455, 273], [470, 296], [477, 297]], '#111', .9, m);
  /* arrow */
  el(s, 'path', { d: 'M718.700 507V432', stroke: '#0d7a0d', 'stroke-width': 1.300, fill: 'none' });
  el(s, 'path', { d: 'M718.700 431l-3.500 5.500h7z', fill: '#0d7a0d' });
  txt(s, 475, 487, 'B', 'big gn');
  txt(s, 529.500, 556.500, 'C', 'big gn');
  txt(s, 715, 409, '10.42', 'big');
  txt(s, 702.500, 426.500, '2.93876', 'big bl');
  txt(s, 716, 431, 'Target', 'big');
  txt(s, 715, 459, '1.25000', 'big');
  txt(s, 702.500, 476, '1.95792', 'big bl');
  txt(s, 715, 497.500, 'Entry', 'big');
  txt(s, 750, 497.500, '1', 'big');
  txt(s, 725, 501, '1.2000', 'big');
  txt(s, 715, 505, 'Stop', 'big');
  txt(s, 746, 505, '1.4', 'big');
  /* sub panels */
  rect(s, 443, 567.500, 518, 132.500, '#fff');
  [568, 631, 660, 688].forEach(y => line(s, 443, y, 930, y, '#ddd', .7));
  line(s, 930, 408, 930, 697, '#ddd', .6);
  line(s, 443, 581.500, 930, 581.500, '#111', 1);
  line(s, 443, 586.500, 930, 586.500, '#111', 1);
  line(s, 443, 603, 930, 603, '#0a8a0a', 1.300);
  line(s, 443, 608.500, 930, 608.500, '#11113a', 1.100);
  poly(s, [[10, 112], [25, 105], [45, 105], [55, 87], [70, 90], [85, 97], [95, 115], [120, 118], [140, 120], [165, 125], [180, 112], [205, 108], [225, 115], [250, 135], [265, 120], [285, 127], [310, 128], [345, 125], [370, 108], [395, 105], [420, 110], [445, 103], [465, 103], [475, 115], [505, 115], [527, 85], [545, 97], [580, 97], [605, 93], [620, 87], [635, 93], [665, 80], [678, 68], [695, 90], [720, 90], [745, 85], [755, 95], [768, 97]], '#44449a', .7, b);
  txt(s, 446, 573.500, '14 Period RSI', 'lbl');
  area(s, [[10, 255], [200, 255], [200, 261], [10, 261]], '#f6c9c9', b);
  poly(s, [[10, 247], [100, 248], [250, 258], [330, 262], [400, 252], [500, 258], [620, 248], [700, 240], [768, 243]], '#5a9a9a', .6, b);
  poly(s, [[10, 258], [150, 258], [260, 262], [340, 260], [420, 245], [520, 243], [640, 243], [768, 242]], '#c06060', .7, b);
  poly(s, [[10, 258], [25, 255], [58, 235], [80, 238], [100, 260], [130, 270], [160, 278], [200, 240], [225, 255], [250, 275], [270, 260], [300, 262], [335, 272], [365, 240], [390, 226], [420, 240], [460, 238], [490, 268], [510, 262], [527, 235], [560, 243], [585, 238], [610, 238], [630, 248], [675, 223], [700, 238], [722, 255], [745, 247], [768, 257]], '#222', .7, b);
  txt(s, 446, 638.500, 'Composite Index', 'lbl');
  area(s, [[10, 285], [768, 285], [768, 308], [280, 304], [10, 304]], '#fad0d0', b);
  area(s, [[10, 355], [768, 357], [768, 363], [10, 363]], '#cdc8f0', b);
  poly(s, [[10, 353], [25, 343], [45, 343], [57, 322], [75, 327], [95, 345], [125, 350], [160, 352], [185, 338], [210, 338], [232, 345], [250, 362], [265, 350], [290, 355], [345, 360], [365, 328], [390, 323], [415, 323], [435, 328], [462, 318], [480, 343], [510, 340], [527, 316], [545, 325], [580, 322], [605, 323], [630, 335], [650, 325], [665, 325], [678, 308], [697, 322], [720, 320], [745, 313], [755, 343], [768, 343]], '#222', .7, b);
  txt(s, 446, 666.500, 'Optex Bands', 'lbl');
  /* axes */
  rect(s, 443, 688, 518, 12, '#fff');
  axisY(s, 930, [['3.3000', 413], ['3.1000', 420], ['2.9000', 428], ['2.7000', 437], ['2.5000', 446], ['2.3000', 456], ['2.1000', 468], ['2.0000', 473], ['1.8000', 486], ['1.7000', 493], ['1.6000', 501], ['1.5000', 508], ['1.4000', 517], ['1.3000', 525], ['1.2000', 535], ['1.1000', 544], ['1.0000', 554], ['0.9500', 565]]);
  tag(s, 933.500, 479.500, 21, '1.9036');
  axisY(s, 930, [['100.00', 576], ['80.00', 586.500], ['60.00', 597], ['40.00', 608], ['20.00', 618.500], ['0.00', 629], ['90.0', 643], ['50.0', 650.500], ['10.0', 657.500], ['2.00', 673], ['0.00', 680.500], ['-2.00', 686.500]]);
  lock(s, 953.500, 415);
  dates(s, [['1', 445], ['Sep', 503], ['Oct', 621], ['Nov', 725], ['Dec', 812], ['2022', 897]], 692);
  el(s, 'rect', { x: 919, y: 688.500, width: 32, height: 7.500, fill: '#fff', stroke: '#bbb', 'stroke-width': .5 });
  txt(s, 921, 692.300, '0.0605392', 'tk');
  lock(s, 956, 692.500, true);
  line(s, 443, 697, 961, 697, '#ddd', .6);
  el(s, 'path', { d: 'M959 538l-2 4 2 4', fill: 'none', stroke: '#777', 'stroke-width': 1 });
})();

/* --------- chart 5 --------- */
(function () {
  const s = $('chart5');
  const m = ([x, y]) => [960 + x / 3, 380 + y / 3];
  area(s, [[453, 401], [530, 401], [550, 390], [570, 357], [590, 352], [612, 351], [640, 420], [648, 428], [453, 428]], '#7fbd7f', m);
  area(s, [[640, 428], [670, 465], [695, 467], [710, 479], [730, 455], [750, 450], [770, 432], [795, 428]], '#f27a7a', m);
  area(s, [[795, 428], [810, 405], [830, 392], [870, 390], [887, 385], [887, 428]], '#7fbd7f', m);
  poly(s, [[453, 428], [887, 428]], '#c8a070', .8, m);
  poly(s, [[420, 915], [445, 505], [453, 428]], '#8a6a3a', .9, m);
  poly(s, [[445, 505], [445, 915]], '#444', .7, m);
  poly(s, [[118, 650], [118, 905]], '#555', .6, m);
  poly(s, [[364, 440], [364, 905]], '#555', .6, m);
  poly(s, [[108, 825], [108, 905]], '#555', .6, m);
  poly(s, [[22, 378], [40, 345], [65, 292], [100, 282], [118, 340], [135, 430], [155, 512], [178, 520], [197, 558], [218, 528], [240, 525], [255, 498], [280, 498], [300, 430], [320, 408], [375, 407], [395, 320], [410, 322]], '#5a5ab8', .7, m);
  poly(s, [[22, 425], [80, 427], [150, 422], [180, 410], [210, 400], [240, 385], [260, 375], [340, 377], [370, 362], [395, 305], [412, 305]], '#d08a8a', .8, m);
  [[25, 430, 478, 430, 478, 0], [40, 395, 660, 420, 593, 1], [61, 480, 612, 556, 592, 0], [79, 515, 612, 558, 585, 1], [99, 575, 745, 587, 743, 1], [118, 625, 905, 650, 742, 0], [138, 540, 690, 578, 650, 0], [157, 540, 610, 568, 577, 0], [177, 330, 592, 363, 568, 0], [196, 340, 468, 348, 364, 0], [216, 293, 432, 350, 362, 1], [236, 355, 455, 362, 387, 1], [256, 258, 550, 387, 453, 1], [276, 390, 490, 400, 455, 0], [295, 395, 605, 402, 543, 1], [315, 460, 597, 472, 545, 0], [334, 395, 503, 435, 472, 0], [354, 320, 530, 332, 435, 0], [374, 315, 400, 333, 362, 1], [393, 130, 370, 187, 362, 0], [413, 148, 260, 187, 224, 1]].forEach(c => candle(s, c, m, 4.200));
  [[35, 350, 376], [68, 435, 457], [148, 493, 517], [113, 597, 624], [189, 295, 322], [225, 247, 270], [260, 213, 240], [381, 271, 295], [303, 347, 372], [336, 347, 372]].forEach(([x, a, q]) => {
    const p = m([x, a]); txt(s, p[0], p[1], '☽', 'sym');
    const r = m([x, q]); txt(s, r[0], r[1], 'q', 'q');
  });
  [416, 458, 495, 534, 575, 611, 654, 688, 732, 768, 803, 844, 878].forEach(x => { const p = m([x, 128]); txt(s, p[0], p[1], 'q', 'q'); });
  /* measure */
  el(s, 'path', { d: 'M999 682h81M1001.500 680.500 999 682l2.500 1.500M1077.500 680.500l2.500 1.500-2.500 1.500', stroke: '#333', 'stroke-width': .6, fill: 'none' });
  rect(s, 1018, 678, 43, 8, '#fff');
  txt(s, 1039.500, 682, '90.0 cal days', 'dt');
  rect(s, 967, 685.500, 310, 14.500, '#fff');
  line(s, 967, 685.500, 1277, 685.500, '#ddd', .6);
  line(s, 1255, 420, 1255, 697, '#ddd', .6);
  const ys = [['2.2000', 134], ['2.1000', 163], ['2.0000', 192], ['1.8000', 256], ['1.7000', 292], ['1.6000', 328], ['1.5500', 348], ['1.5000', 367], ['1.4500', 388], ['1.4000', 409], ['1.3400', 436], ['1.3000', 455], ['1.2400', 484], ['1.2000', 504], ['1.1400', 535], ['1.1000', 558], ['1.0300', 597], ['1.0000', 615], ['0.9600', 640], ['0.9300', 660], ['0.9000', 678], ['0.8600', 707], ['0.8300', 728], ['0.8000', 750], ['0.7600', 783], ['0.7300', 806], ['0.7000', 831], ['0.6600', 868], ['0.6400', 888], ['0.6200', 907]];
  axisY(s, 1255, ys.map(([t, y]) => [t, 380 + y / 3]));
  tag(s, 1259.500, 454.700, 17, '1.9036');
  dates(s, [['Jul', 980], ['Sep', 1039], ['Nov', 1097], ['2022', 1155], ['Mar', 1209]], 690.500);
  el(s, 'rect', { x: 1236, y: 688, width: 26, height: 8, fill: '#fff', stroke: '#bbb', 'stroke-width': .5 });
  txt(s, 1237.500, 692, '0.0404099', 'tk');
  lock(s, 1272, 692, true);
})();
```
